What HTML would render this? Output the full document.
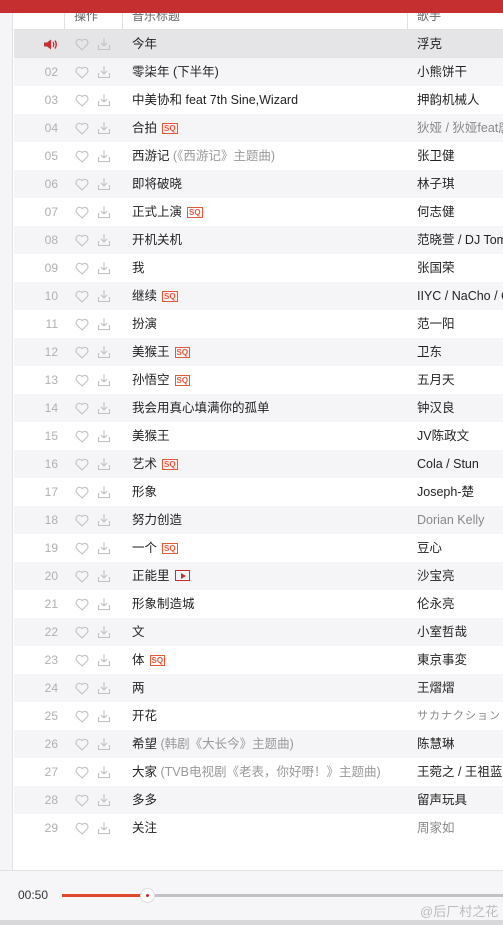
<!DOCTYPE html>
<html><head><meta charset="utf-8">
<style>
*{margin:0;padding:0;box-sizing:border-box}
body{width:503px;height:925px;overflow:hidden;background:#fff;font-family:"Liberation Sans","Noto Sans CJK SC",sans-serif;font-size:12px;color:#333;position:relative}
.top{position:absolute;left:0;top:0;width:503px;height:13px;background:#c62f2f}
.side{position:absolute;left:0;top:13px;width:13px;height:857px;background:#f5f5f7;border-right:1px solid #e1e1e2}
.hdr{position:absolute;left:14px;top:13px;width:489px;height:17px;background:#fff;border-bottom:1px solid #e1e1e2;color:#666;font-size:12px;overflow:hidden}
.hdr span{position:absolute;top:-6px}
.hdr i{position:absolute;top:0;width:1px;height:17px;background:#e1e1e2}
.list{position:absolute;left:14px;top:30px;width:489px}
.r{height:28px;position:relative;background:#fff;white-space:nowrap}
.r.g{background:#f5f5f7}
.r.on{background:#e5e5e8}
.n,.t,.s{position:absolute;top:0;height:28px;line-height:28px}
.n{right:445px;color:#b0b0b0;font-size:12px;width:30px;text-align:right}
.hi{position:absolute;left:61px;top:8px}
.dl{position:absolute;left:83px;top:7px}
.t{left:118px;font-size:12.5px;color:#222}
.t em{font-style:normal;color:#999}
.s{left:403px;font-size:12.5px;color:#222}
.s.gy{color:#888}
.sq{display:inline-block;border:1px solid #e25a3a;color:#e25a3a;font-size:8px;line-height:9px;padding:0 1px;margin-left:5px;vertical-align:1px;font-weight:bold;font-family:"Liberation Sans",sans-serif}
.mv{display:inline-block;border:1px solid #c62f2f;width:15px;height:11px;margin-left:5px;vertical-align:-1px;position:relative}
.mv:after{content:"";position:absolute;left:5px;top:2px;border-left:5px solid #c62f2f;border-top:3px solid transparent;border-bottom:3px solid transparent}
.foot{position:absolute;left:0;top:870px;width:503px;height:50px;background:#f6f6f8;border-top:1px solid #e1e1e2}
.bot{position:absolute;left:0;top:920px;width:503px;height:5px;background:#d8d8da}
.time{position:absolute;left:18px;top:17px;font-size:12px;color:#333}
.bar{position:absolute;left:62px;top:23px;width:441px;height:3px;background:#c2c2c4}
.bar b{position:absolute;left:0;top:0;width:80px;height:3px;background:#e0482e}
.knob{position:absolute;left:140px;top:17px;width:15px;height:15px;border-radius:50%;background:#fff;border:1px solid #ddd}
.knob:after{content:"";position:absolute;left:5px;top:5px;width:3px;height:3px;border-radius:50%;background:#c62f2f}
.wm{position:absolute;left:420px;top:30px;color:#bbb;font-size:13px}
</style></head><body>
<div class="top"></div>
<div class="side"></div>
<div class="hdr"><i style="left:50px"></i><i style="left:108px"></i><i style="left:393px"></i>
<span style="left:60px">操作</span><span style="left:118px">音乐标题</span><span style="left:403px">歌手</span></div>
<svg width="0" height="0" style="position:absolute"><defs>
<symbol id="h" viewBox="0 0 14 13"><path d="M7 12 L1.8 6.8 A3 3 0 0 1 7 2.6 A3 3 0 0 1 12.2 6.8 Z" fill="none" stroke="#c2c2c2" stroke-width="1.1"/></symbol>
<symbol id="d" viewBox="0 0 14 14"><path d="M7 1 V9 M4 6 L7 9 L10 6 M1.5 8 V12.5 H12.5 V8" fill="none" stroke="#c2c2c2" stroke-width="1.1"/></symbol>
</defs></svg>
<div class="list">
<div class="r on"><svg style="position:absolute;left:30px;top:9px" width="14" height="11" viewBox="0 0 14 11"><path d="M0 3.5H3L7 0.5V10.5L3 7.5H0Z" fill="#c62f2f"/><path d="M9 3 Q10.5 5.5 9 8 M11 1.5 Q13.5 5.5 11 9.5" fill="none" stroke="#c62f2f" stroke-width="1.3"/></svg><svg class="hi" width="14" height="13"><use href="#h"/></svg><svg class="dl" width="14" height="14"><use href="#d"/></svg><div class="t">今年</div><div class="s">浮克</div></div>
<div class="r g"><div class="n">02</div><svg class="hi" width="14" height="13"><use href="#h"/></svg><svg class="dl" width="14" height="14"><use href="#d"/></svg><div class="t">零柒年 (下半年)</div><div class="s">小熊饼干</div></div>
<div class="r"><div class="n">03</div><svg class="hi" width="14" height="13"><use href="#h"/></svg><svg class="dl" width="14" height="14"><use href="#d"/></svg><div class="t">中美协和 feat 7th Sine,Wizard</div><div class="s">押韵机械人</div></div>
<div class="r g"><div class="n">04</div><svg class="hi" width="14" height="13"><use href="#h"/></svg><svg class="dl" width="14" height="14"><use href="#d"/></svg><div class="t">合拍<span class="sq">SQ</span></div><div class="s gy">狄娅 / 狄娅feat唐</div></div>
<div class="r"><div class="n">05</div><svg class="hi" width="14" height="13"><use href="#h"/></svg><svg class="dl" width="14" height="14"><use href="#d"/></svg><div class="t">西游记 <em>(《西游记》主题曲)</em></div><div class="s">张卫健</div></div>
<div class="r g"><div class="n">06</div><svg class="hi" width="14" height="13"><use href="#h"/></svg><svg class="dl" width="14" height="14"><use href="#d"/></svg><div class="t">即将破晓</div><div class="s">林子琪</div></div>
<div class="r"><div class="n">07</div><svg class="hi" width="14" height="13"><use href="#h"/></svg><svg class="dl" width="14" height="14"><use href="#d"/></svg><div class="t">正式上演<span class="sq">SQ</span></div><div class="s">何志健</div></div>
<div class="r g"><div class="n">08</div><svg class="hi" width="14" height="13"><use href="#h"/></svg><svg class="dl" width="14" height="14"><use href="#d"/></svg><div class="t">开机关机</div><div class="s">范晓萱 / DJ Tom</div></div>
<div class="r"><div class="n">09</div><svg class="hi" width="14" height="13"><use href="#h"/></svg><svg class="dl" width="14" height="14"><use href="#d"/></svg><div class="t">我</div><div class="s">张国荣</div></div>
<div class="r g"><div class="n">10</div><svg class="hi" width="14" height="13"><use href="#h"/></svg><svg class="dl" width="14" height="14"><use href="#d"/></svg><div class="t">继续<span class="sq">SQ</span></div><div class="s">IIYC / NaCho / C</div></div>
<div class="r"><div class="n">11</div><svg class="hi" width="14" height="13"><use href="#h"/></svg><svg class="dl" width="14" height="14"><use href="#d"/></svg><div class="t">扮演</div><div class="s">范一阳</div></div>
<div class="r g"><div class="n">12</div><svg class="hi" width="14" height="13"><use href="#h"/></svg><svg class="dl" width="14" height="14"><use href="#d"/></svg><div class="t">美猴王<span class="sq">SQ</span></div><div class="s">卫东</div></div>
<div class="r"><div class="n">13</div><svg class="hi" width="14" height="13"><use href="#h"/></svg><svg class="dl" width="14" height="14"><use href="#d"/></svg><div class="t">孙悟空<span class="sq">SQ</span></div><div class="s">五月天</div></div>
<div class="r g"><div class="n">14</div><svg class="hi" width="14" height="13"><use href="#h"/></svg><svg class="dl" width="14" height="14"><use href="#d"/></svg><div class="t">我会用真心填满你的孤单</div><div class="s">钟汉良</div></div>
<div class="r"><div class="n">15</div><svg class="hi" width="14" height="13"><use href="#h"/></svg><svg class="dl" width="14" height="14"><use href="#d"/></svg><div class="t">美猴王</div><div class="s">JV陈政文</div></div>
<div class="r g"><div class="n">16</div><svg class="hi" width="14" height="13"><use href="#h"/></svg><svg class="dl" width="14" height="14"><use href="#d"/></svg><div class="t">艺术<span class="sq">SQ</span></div><div class="s">Cola / Stun</div></div>
<div class="r"><div class="n">17</div><svg class="hi" width="14" height="13"><use href="#h"/></svg><svg class="dl" width="14" height="14"><use href="#d"/></svg><div class="t">形象</div><div class="s">Joseph-楚</div></div>
<div class="r g"><div class="n">18</div><svg class="hi" width="14" height="13"><use href="#h"/></svg><svg class="dl" width="14" height="14"><use href="#d"/></svg><div class="t">努力创造</div><div class="s gy">Dorian Kelly</div></div>
<div class="r"><div class="n">19</div><svg class="hi" width="14" height="13"><use href="#h"/></svg><svg class="dl" width="14" height="14"><use href="#d"/></svg><div class="t">一个<span class="sq">SQ</span></div><div class="s">豆心</div></div>
<div class="r g"><div class="n">20</div><svg class="hi" width="14" height="13"><use href="#h"/></svg><svg class="dl" width="14" height="14"><use href="#d"/></svg><div class="t">正能里<span class="mv"></span></div><div class="s">沙宝亮</div></div>
<div class="r"><div class="n">21</div><svg class="hi" width="14" height="13"><use href="#h"/></svg><svg class="dl" width="14" height="14"><use href="#d"/></svg><div class="t">形象制造城</div><div class="s">伦永亮</div></div>
<div class="r g"><div class="n">22</div><svg class="hi" width="14" height="13"><use href="#h"/></svg><svg class="dl" width="14" height="14"><use href="#d"/></svg><div class="t">文</div><div class="s">小室哲哉</div></div>
<div class="r"><div class="n">23</div><svg class="hi" width="14" height="13"><use href="#h"/></svg><svg class="dl" width="14" height="14"><use href="#d"/></svg><div class="t">体<span class="sq">SQ</span></div><div class="s">東京事変</div></div>
<div class="r g"><div class="n">24</div><svg class="hi" width="14" height="13"><use href="#h"/></svg><svg class="dl" width="14" height="14"><use href="#d"/></svg><div class="t">两</div><div class="s">王熠熠</div></div>
<div class="r"><div class="n">25</div><svg class="hi" width="14" height="13"><use href="#h"/></svg><svg class="dl" width="14" height="14"><use href="#d"/></svg><div class="t">开花</div><div class="s gy" style="font-size:11px;letter-spacing:1px">サカナクション</div></div>
<div class="r g"><div class="n">26</div><svg class="hi" width="14" height="13"><use href="#h"/></svg><svg class="dl" width="14" height="14"><use href="#d"/></svg><div class="t">希望 <em>(韩剧《大长今》主题曲)</em></div><div class="s">陈慧琳</div></div>
<div class="r"><div class="n">27</div><svg class="hi" width="14" height="13"><use href="#h"/></svg><svg class="dl" width="14" height="14"><use href="#d"/></svg><div class="t">大家 <em>(TVB电视剧《老表，你好嘢！》主题曲)</em></div><div class="s">王菀之 / 王祖蓝</div></div>
<div class="r g"><div class="n">28</div><svg class="hi" width="14" height="13"><use href="#h"/></svg><svg class="dl" width="14" height="14"><use href="#d"/></svg><div class="t">多多</div><div class="s">留声玩具</div></div>
<div class="r"><div class="n">29</div><svg class="hi" width="14" height="13"><use href="#h"/></svg><svg class="dl" width="14" height="14"><use href="#d"/></svg><div class="t">关注</div><div class="s gy">周家如</div></div>
</div>
<div class="foot"><div class="time">00:50</div><div class="bar"><b></b></div><div class="knob"></div><div class="wm">@后厂村之花</div></div>
<div class="bot"></div>
</body></html>
